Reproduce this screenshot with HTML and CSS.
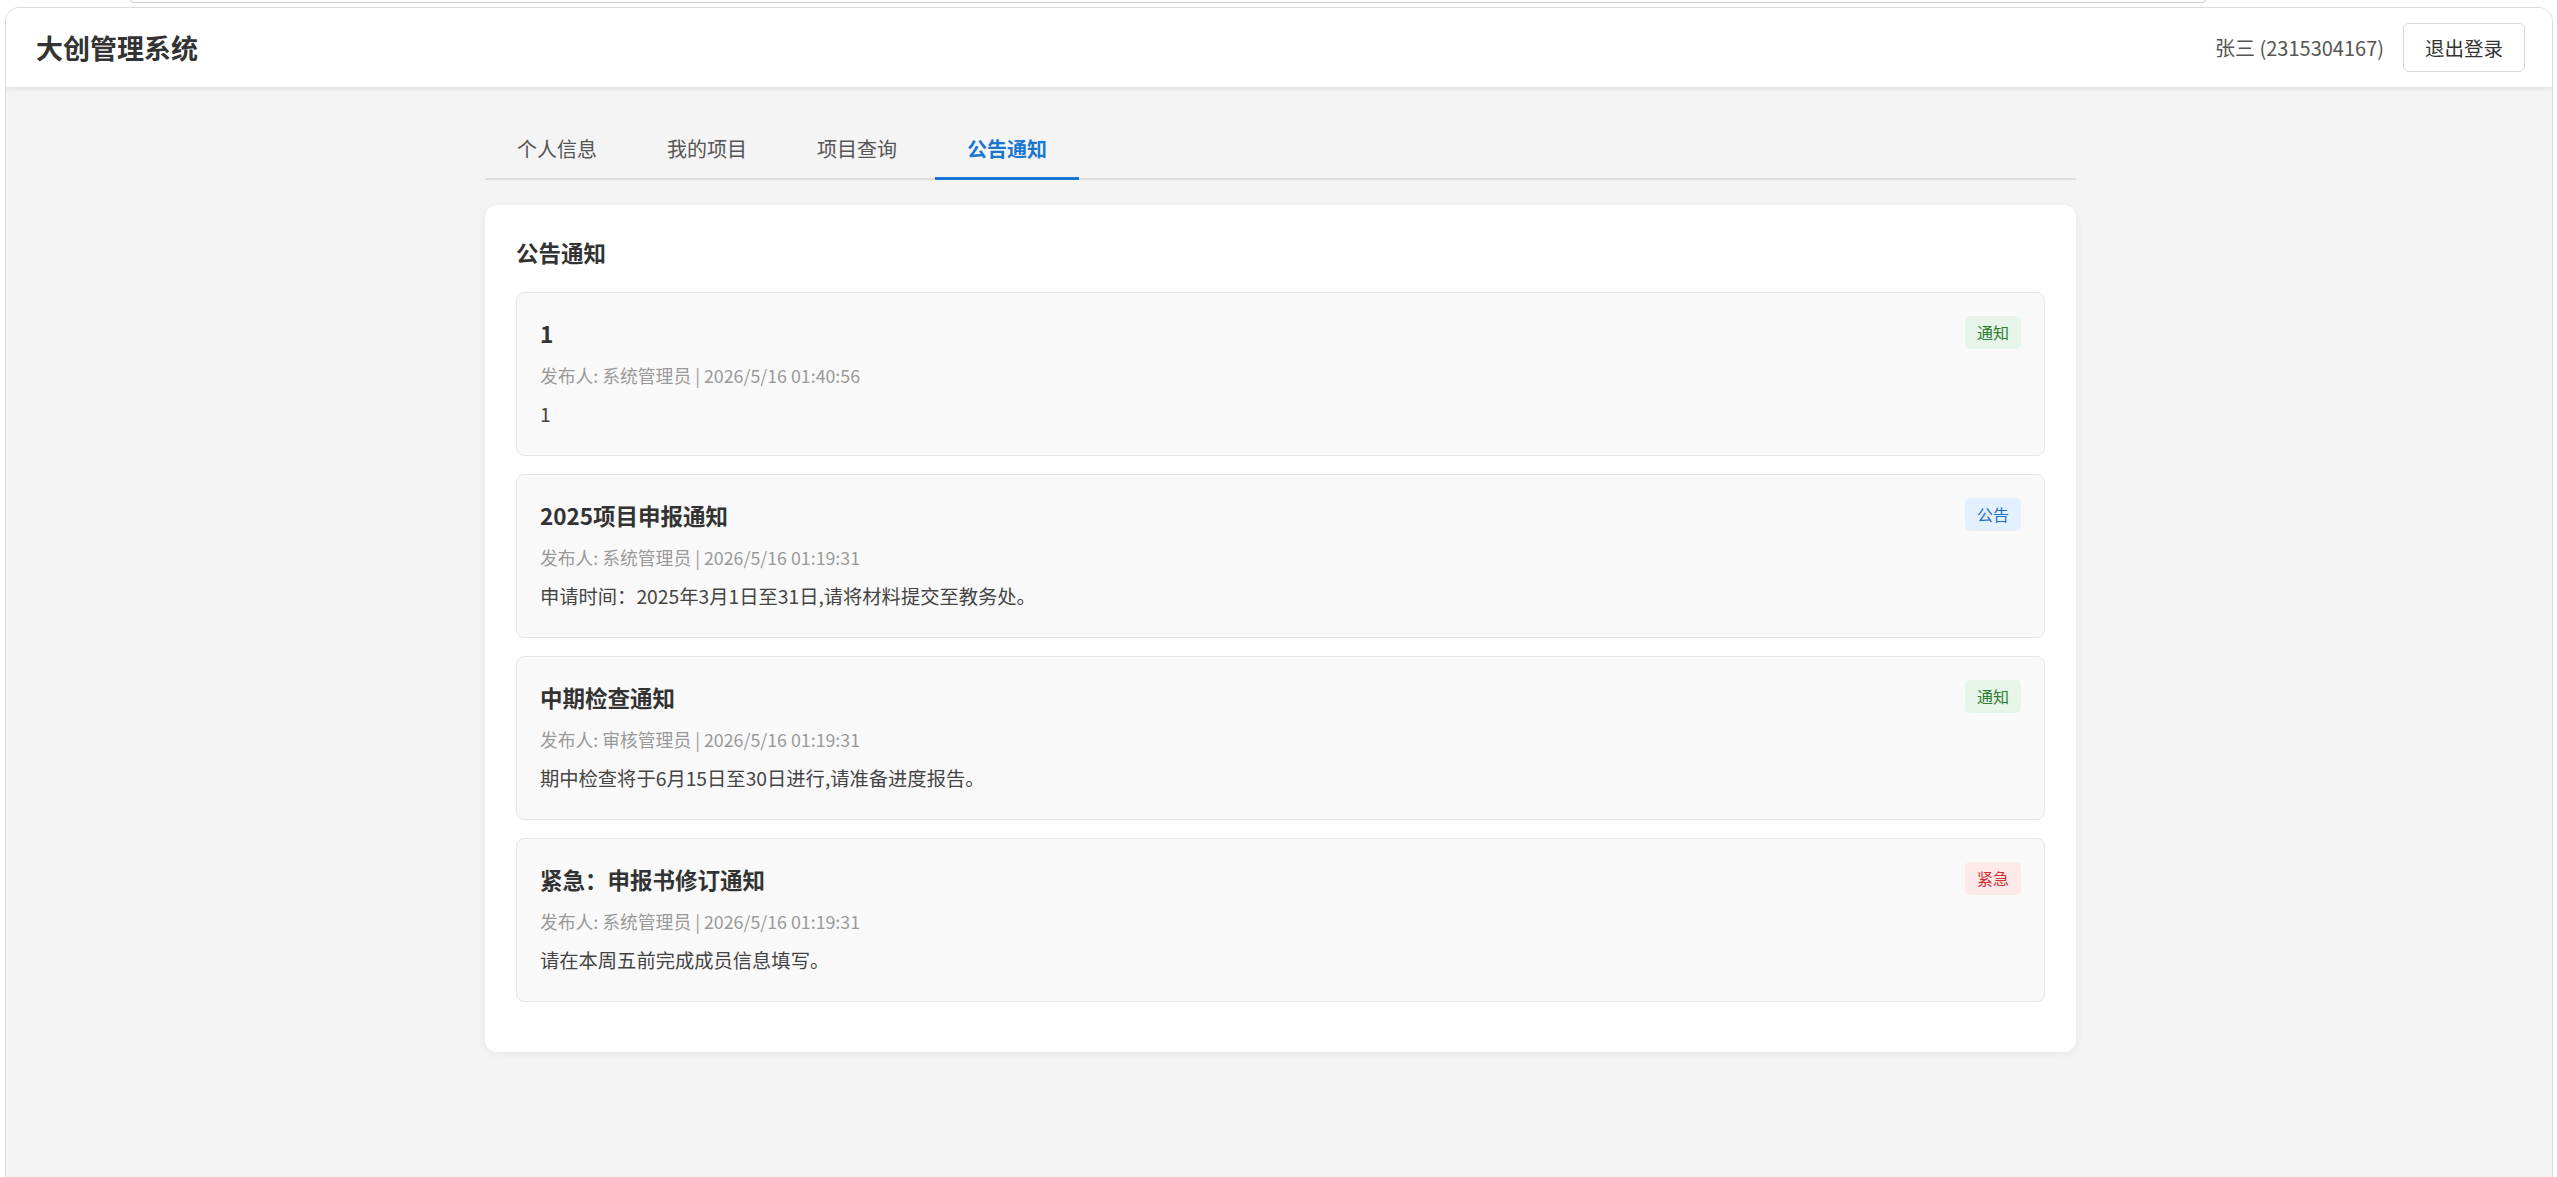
FILE: index.html
```html
<!DOCTYPE html>
<html lang="zh-CN">
<head>
    <meta charset="UTF-8">
    <meta name="viewport" content="width=device-width, initial-scale=1.0">
    <title>大创管理系统</title>
    <link rel="stylesheet" href="styles.css">
</head>
<body>
<div class="top-strip"></div>

<div class="app">
    <!-- 顶部栏 -->
    <header class="topbar">
        <h1 class="brand">大创管理系统</h1>
        <div class="user-box">
            <span class="user-name">张三 (2315304167)</span>
            <button class="btn-logout">退出登录</button>
        </div>
    </header>

    <main class="main">
        <!-- 标签页 -->
        <nav class="tabs">
            <a class="tab">个人信息</a>
            <a class="tab">我的项目</a>
            <a class="tab">项目查询</a>
            <a class="tab active">公告通知</a>
        </nav>

        <!-- 公告列表 -->
        <section class="panel">
            <h2 class="panel-title">公告通知</h2>
            <div class="notice-list">
                <div class="notice">
                    <div class="notice-head">
                        <span class="notice-title">1</span>
                        <span class="tag tag-notice">通知</span>
                    </div>
                    <div class="notice-meta">发布人: 系统管理员 | 2026/5/16 01:40:56</div>
                    <div class="notice-body">1</div>
                </div>
                <div class="notice">
                    <div class="notice-head">
                        <span class="notice-title">2025项目申报通知</span>
                        <span class="tag tag-announce">公告</span>
                    </div>
                    <div class="notice-meta">发布人: 系统管理员 | 2026/5/16 01:19:31</div>
                    <div class="notice-body">申请时间：2025年3月1日至31日,请将材料提交至教务处。</div>
                </div>
                <div class="notice">
                    <div class="notice-head">
                        <span class="notice-title">中期检查通知</span>
                        <span class="tag tag-notice">通知</span>
                    </div>
                    <div class="notice-meta">发布人: 审核管理员 | 2026/5/16 01:19:31</div>
                    <div class="notice-body">期中检查将于6月15日至30日进行,请准备进度报告。</div>
                </div>
                <div class="notice">
                    <div class="notice-head">
                        <span class="notice-title">紧急：申报书修订通知</span>
                        <span class="tag tag-urgent">紧急</span>
                    </div>
                    <div class="notice-meta">发布人: 系统管理员 | 2026/5/16 01:19:31</div>
                    <div class="notice-body">请在本周五前完成成员信息填写。</div>
                </div>
            </div>
        </section>
    </main>
</div>
</body>
</html>
```

FILE: styles.css
```css
* {
    box-sizing: border-box;
}

html, body {
    margin: 0;
    padding: 0;
    overflow: hidden;
    background: #fff;
    font-family: "Noto Sans CJK SC", "Microsoft YaHei", sans-serif;
    color: #333;
}

/* 顶部细条 */
.top-strip {
    width: 2076px;
    height: 3px;
    margin-left: 130px;
    border: 1px solid #cfcfcf;
    border-top: none;
    border-radius: 0 0 8px 8px;
}

/* 外框 */
.app {
    margin: 4px 4px 0 5px;
    min-height: 1200px;
    background: #f4f4f4;
    border: 1px solid #dcdcdc;
    border-radius: 14px;
    overflow: hidden;
}

.topbar {
    height: 79px;
    display: flex;
    justify-content: space-between;
    align-items: center;
    padding: 0 27px 0 30px;
    background: #fff;
    box-shadow: 0 2px 4px rgba(0, 0, 0, 0.08);
}

.brand {
    margin: 0;
    font-size: 27px;
    font-weight: 700;
    color: #333;
}

.user-box {
    display: flex;
    align-items: center;
    gap: 19px;
}

.user-name {
    font-size: 20px;
    color: #555;
}

.btn-logout {
    width: 122px;
    height: 49px;
    font-family: inherit;
    font-size: 19.5px;
    color: #333;
    background: #fff;
    border: 1px solid #d9d9d9;
    border-radius: 6px;
    cursor: pointer;
}

/* 主体 */
.main {
    width: 1594px;
    margin: 0 auto;
    padding: 32px 0 0 3px;
}

.tabs {
    display: flex;
    border-bottom: 2px solid #dedede;
    margin-bottom: 25px;
}

.tab {
    padding: 15px 32px 13px;
    margin-right: 6px;
    font-size: 20px;
    line-height: 30px;
    color: #555;
    cursor: pointer;
    border-bottom: 3px solid transparent;
    margin-bottom: -2px;
}

.tab.active {
    color: #1976d2;
    font-weight: 700;
    border-bottom-color: #1976d2;
}

.panel {
    background: #fff;
    border-radius: 12px;
    padding: 31px 31px 32px;
    box-shadow: 0 2px 8px rgba(0, 0, 0, 0.06);
}

.panel-title {
    margin: 0 0 23px;
    font-size: 22.5px;
    line-height: 33px;
    font-weight: 700;
    color: #333;
}

.notice {
    background: #f9f9f9;
    border: 1px solid #e6e6e6;
    border-radius: 8px;
    padding: 23px 23px 27px;
    margin-bottom: 18px;
}

.notice-head {
    display: flex;
    justify-content: space-between;
    align-items: center;
    height: 33px;
}

.notice-title {
    font-size: 22.5px;
    font-weight: 700;
    color: #333;
}

.tag {
    font-size: 16px;
    line-height: 33px;
    padding: 0 12px;
    border-radius: 5px;
}

.tag-notice {
    background: #e6f4ea;
    color: #2e7d32;
}

.tag-announce {
    background: #e3f0fd;
    color: #1e6fc2;
}

.tag-urgent {
    background: #fde8ea;
    color: #d32f2f;
}

.notice-meta {
    margin-top: 13px;
    font-size: 17.8px;
    line-height: 26px;
    color: #999;
}

.notice-body {
    margin-top: 12px;
    font-size: 19.3px;
    line-height: 28px;
    color: #444;
}
```
